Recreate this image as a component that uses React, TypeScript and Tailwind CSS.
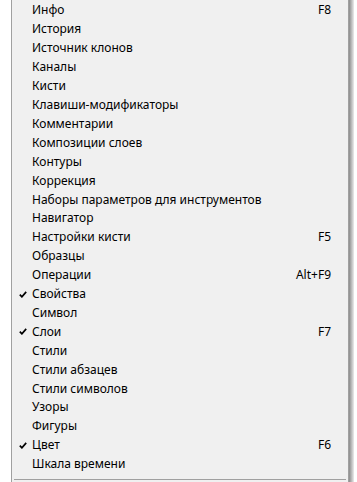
import React from 'react';

type Item = { label: string; shortcut?: string; checked?: boolean };

const items: Item[] = [
  { label: 'Инфо', shortcut: 'F8' },
  { label: 'История' },
  { label: 'Источник клонов' },
  { label: 'Каналы' },
  { label: 'Кисти' },
  { label: 'Клавиши-модификаторы' },
  { label: 'Комментарии' },
  { label: 'Композиции слоев' },
  { label: 'Контуры' },
  { label: 'Коррекция' },
  { label: 'Наборы параметров для инструментов' },
  { label: 'Навигатор' },
  { label: 'Настройки кисти', shortcut: 'F5' },
  { label: 'Образцы' },
  { label: 'Операции', shortcut: 'Alt+F9' },
  { label: 'Свойства', checked: true },
  { label: 'Символ' },
  { label: 'Слои', shortcut: 'F7', checked: true },
  { label: 'Стили' },
  { label: 'Стили абзацев' },
  { label: 'Стили символов' },
  { label: 'Узоры' },
  { label: 'Фигуры' },
  { label: 'Цвет', shortcut: 'F6', checked: true },
  { label: 'Шкала времени' },
];

function Check() {
  return (
    <svg width="8" height="7" viewBox="0 0 8 7" className="block">
      <path d="M0.8 3.6 L2.9 5.8 L7.2 0.9" fill="none" stroke="#000" strokeWidth="1.7" />
    </svg>
  );
}

export default function App() {
  return (
    <div
      className="w-[357px] h-[482px] bg-white flex overflow-hidden text-black"
      style={{ fontFamily: '"Noto Sans", "Open Sans", sans-serif' }}
    >
      <div className="w-[11px] shrink-0 bg-white" />
      {/* menu panel */}
      <div className="w-[338px] shrink-0 bg-[#f0f0f0] border-l border-r border-[#a0a0a0] flex flex-col">
        <ul className="flex flex-col pt-px">
          {items.map((it) => (
            <li key={it.label} className="h-[18.92px] flex items-center pr-[17px] text-[12px] leading-none">
              <span className="w-[20px] shrink-0 flex justify-end pr-[5px]">{it.checked && <Check />}</span>
              <span className="flex-1 whitespace-nowrap">{it.label}</span>
              {it.shortcut && <span className="whitespace-nowrap">{it.shortcut}</span>}
            </li>
          ))}
        </ul>
        <div className="mt-[5px] mx-[2px] h-px bg-[#a0a0a0]" />
      </div>
      {/* shadow */}
      <div className="w-[5px] shrink-0 bg-gradient-to-r from-[#8a8a8a] to-[#ececec]" />
      <div className="flex-1 bg-white" />
    </div>
  );
}
